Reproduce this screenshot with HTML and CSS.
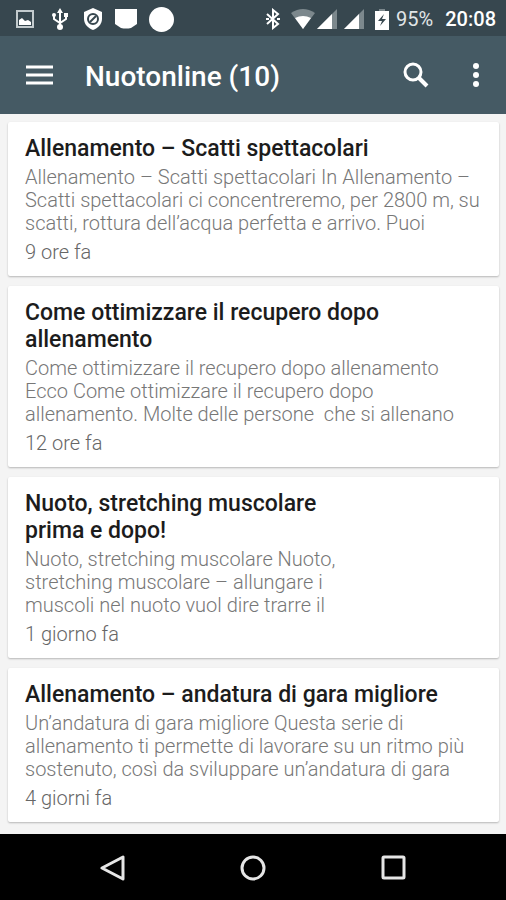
FILE: index.html
```html
<!DOCTYPE html>
<html lang="it">

<head>
    <meta charset="UTF-8">
    <meta name="viewport" content="width=device-width, initial-scale=1.0">
    <title>Nuotonline</title>
    <link rel="stylesheet" href="styles.css">
</head>

<body>
    <div class="statusbar">
        <div class="notifications">
            <svg width="20" height="20" viewBox="0 0 20 20">
                <path d="M2 2h16v16H2z" fill="none" stroke="#c3cbce" stroke-width="2" />
                <path d="M4 16v-5l3-2 3 3 3-1 3 2v3z" fill="#fff" />
            </svg>
            <svg class="usb" width="18" height="24" viewBox="0 0 18 24">
                <path d="M9 3v17M3 8v4l6 4 6-4V8" fill="none" stroke="#fff" stroke-width="2" />
                <path d="M9 1l3 5H6zM13 6h4v4h-4z" fill="#fff" />
                <circle cx="3" cy="8" r="2" fill="#fff" />
                <circle cx="9" cy="20" r="3" fill="#fff" />
            </svg>
            <svg width="20" height="24" viewBox="0 0 20 24">
                <path d="M10 1l9 4v7c0 5-4 9-9 11-5-2-9-6-9-11V5z" fill="#fff" />
                <circle cx="10" cy="12" r="5" fill="none" stroke="#37474f" stroke-width="2" />
                <path d="M7 15l6-6" stroke="#37474f" stroke-width="2" />
            </svg>
            <svg width="22" height="20" viewBox="0 0 22 20">
                <path d="M0 0h22v15l-6 4q-5 1-10 0l-6-4z" fill="#fff" />
            </svg>
            <svg width="25" height="25" viewBox="0 0 26 26">
                <circle cx="13" cy="13" r="13" fill="#fff" />
            </svg>
        </div>
        <div class="system">
            <svg width="14" height="22" viewBox="0 0 14 22">
                <path d="M1 6l11 10-5 4V2l5 4L1 16" fill="none" stroke="#fff" stroke-width="2" />
                <path d="M0 10h3v2H0zM11 10h3v2h-3z" fill="#fff" />
            </svg>
            <svg class="wifi" width="24" height="20" viewBox="0 0 24 20">
                <path d="M0 4Q12-4 24 4L12 20z" fill="#7c888d" />
                <path d="M4 9q8-4 16 0l-8 11z" fill="#fff" />
            </svg>
            <svg width="20" height="20" viewBox="0 0 20 20">
                <path d="M20 0v20H0z" fill="#7c888d" />
                <path d="M15 5v15H0z" fill="#fff" />
            </svg>
            <svg class="signal" width="20" height="20" viewBox="0 0 20 20">
                <path d="M20 0v20H0z" fill="#7c888d" />
                <path d="M15 5v15H0z" fill="#fff" />
            </svg>
            <svg class="battery" width="14" height="21" viewBox="0 0 14 21">
                <path d="M4 0h6v2H4z" fill="#7c888d" />
                <path d="M0 2h14v19H0z" fill="#fff" />
                <path d="M9 5l-6 7h4l-2 5 6-7H7z" fill="#37474f" />
            </svg>
            <span class="percent">95%</span>
            <span class="clock">20:08</span>
        </div>
    </div>

    <header class="toolbar">
        <button class="iconButton" aria-label="Menu">
            <svg width="28" height="20" viewBox="0 0 28 20">
                <path d="M0 2h27M0 10h27M0 18h27" stroke="#fff" stroke-width="3" />
            </svg>
        </button>
        <h1 class="title">Nuotonline (10)</h1>
        <button class="iconButton" aria-label="Cerca">
            <svg width="26" height="26" viewBox="0 0 26 26">
                <circle cx="10" cy="10" r="8" fill="none" stroke="#fff" stroke-width="3" />
                <path d="M16 16l8 8" stroke="#fff" stroke-width="4" />
            </svg>
        </button>
        <button class="iconButton more" aria-label="Altro">
            <svg width="8" height="24" viewBox="0 0 8 24">
                <g fill="#fff">
                    <circle cx="4" cy="3" r="3" />
                    <circle cx="4" cy="12" r="3" />
                    <circle cx="4" cy="21" r="3" />
                </g>
            </svg>
        </button>
    </header>

    <main class="feed">
        <article class="card">
            <h2 class="cardTitle">Allenamento – Scatti spettacolari</h2>
            <p class="cardText">Allenamento – Scatti spettacolari In Allenamento – Scatti spettacolari ci
                concentreremo, per 2800 m, su scatti, rottura dell’acqua perfetta e arrivo. Puoi</p>
            <div class="cardTime">9 ore fa</div>
        </article>
        <article class="card">
            <h2 class="cardTitle">Come ottimizzare il recupero dopo allenamento</h2>
            <p class="cardText">Come ottimizzare il recupero dopo allenamento Ecco Come ottimizzare il recupero dopo
                allenamento. Molte delle persone&nbsp; che si allenano</p>
            <div class="cardTime">12 ore fa</div>
        </article>
        <article class="card narrow">
            <h2 class="cardTitle">Nuoto, stretching muscolare prima e dopo!</h2>
            <p class="cardText">Nuoto, stretching muscolare Nuoto, stretching muscolare – allungare i muscoli nel nuoto
                vuol dire trarre il</p>
            <div class="cardTime">1 giorno fa</div>
        </article>
        <article class="card">
            <h2 class="cardTitle">Allenamento – andatura di gara migliore</h2>
            <p class="cardText">Un’andatura di gara migliore Questa serie di allenamento ti permette di lavorare su un
                ritmo più sostenuto, così da sviluppare un’andatura di gara</p>
            <div class="cardTime">4 giorni fa</div>
        </article>
    </main>

    <nav class="navbar">
        <button class="iconButton" aria-label="Indietro">
            <svg width="26" height="26" viewBox="0 0 26 26">
                <path d="M2 13L23 2v22z" fill="none" stroke="#e6e6e6" stroke-width="3" stroke-linejoin="round" />
            </svg>
        </button>
        <button class="iconButton" aria-label="Home">
            <svg width="26" height="26" viewBox="0 0 26 26">
                <circle cx="13" cy="13" r="11" fill="none" stroke="#e6e6e6" stroke-width="3" />
            </svg>
        </button>
        <button class="iconButton" aria-label="Recenti">
            <svg width="26" height="26" viewBox="0 0 26 26">
                <rect x="3" y="2" width="21" height="21" rx="1" fill="none" stroke="#e6e6e6" stroke-width="3" />
            </svg>
        </button>
    </nav>
</body>

</html>
```
FILE: styles.css
```css
* {
    box-sizing: border-box;
    margin: 0;
    padding: 0;
}

body {
    display: flex;
    flex-direction: column;
    min-height: 100vh;
    background-color: #f4f4f4;
    font-family: Roboto, sans-serif;
}

svg {
    display: block;
    flex-shrink: 0;
}

.statusbar {
    display: flex;
    align-items: center;
    justify-content: space-between;
    height: 36px;
    padding: 2px 10px 0 15px;
    background-color: #37474f;
    color: #fff;
}

.notifications {
    display: flex;
    align-items: center;
    gap: 12px;
}

.usb {
    margin: 0 2px 0 4px;
}

.system {
    display: flex;
    align-items: center;
}

.wifi {
    margin-left: 11px;
    margin-right: 2px;
}

.signal {
    margin-left: 7px;
}

.battery {
    margin-left: 11px;
    margin-right: 7px;
}

.percent {
    font-size: 20px;
    color: #e1e5e7;
}

.clock {
    margin-left: 12px;
    font-size: 20px;
    font-weight: 500;
}

.toolbar {
    display: flex;
    align-items: center;
    height: 78px;
    padding: 0 18px 0 20px;
    background-color: #455a64;
    color: #fff;
}

.title {
    flex: 1;
    margin-left: 25px;
    padding-top: 2px;
    font-size: 28px;
    font-weight: 500;
}

.iconButton {
    display: flex;
    align-items: center;
    justify-content: center;
    width: 40px;
    height: 48px;
    border: none;
    background: none;
    cursor: pointer;
}

.more {
    width: 24px;
    margin-left: 28px;
}

.feed {
    flex: 1;
    display: flex;
    flex-direction: column;
    gap: 10px;
    padding: 8px 7px 12px 8px;
}

.card {
    padding: 13px 17px 12px;
    border-radius: 2px;
    background-color: #fff;
    box-shadow: 0 1px 2px rgba(0, 0, 0, 0.25);
}

.cardTitle {
    font-size: 23px;
    line-height: 27px;
    font-weight: 500;
    color: #1c1c1c;
}

.cardText {
    margin-top: 4px;
    font-size: 20px;
    line-height: 23px;
    font-weight: 300;
    color: #777;
}

.cardTime {
    margin-top: 5px;
    font-size: 20px;
    line-height: 24px;
    font-weight: 300;
    color: #666;
}

.narrow {
    padding-right: 150px;
}

.navbar {
    display: flex;
    align-items: center;
    justify-content: center;
    gap: 100px;
    height: 67px;
    background-color: #000;
}
```
